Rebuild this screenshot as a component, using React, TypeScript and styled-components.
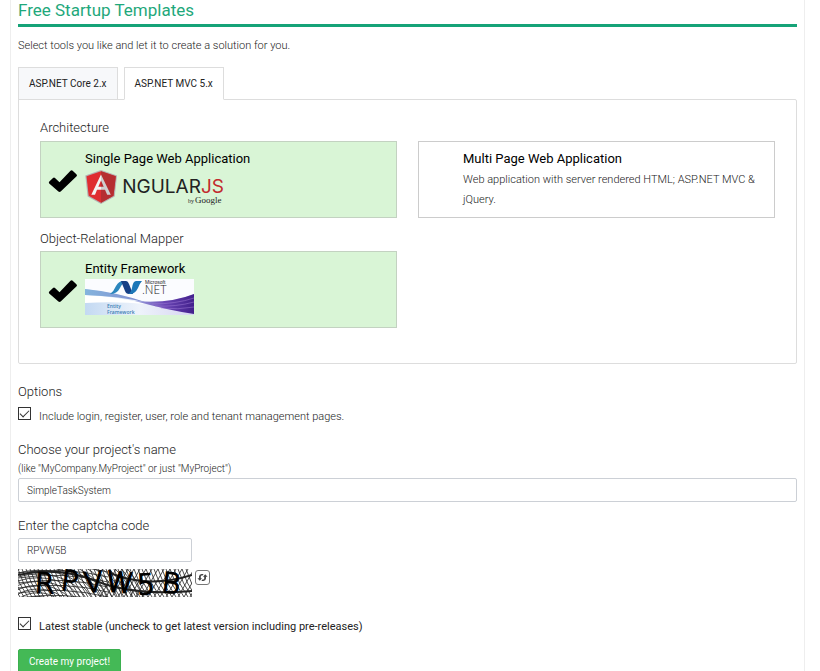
import React, { useState } from "react";
import styled, { createGlobalStyle } from "styled-components";

const GlobalStyle = createGlobalStyle`
  *, *::before, *::after { box-sizing: border-box; }
  html { overflow: hidden; }
  body {
    margin: 0;
    background: #fff;
    color: #222;
    font-family: Roboto, "Liberation Sans", sans-serif;
    font-size: 11px;
    font-weight: 300;
  }
`;

const Page = styled.main`
  margin: 0 15px 0 10px;
  padding: 0 7px;
  border: solid #eee;
  border-width: 0 1px;
`;

const Title = styled.h1`
  margin: 0 0 8px;
  height: 27px;
  border-bottom: 3px solid #16a378;
  color: #1fa87b;
  font-size: 17px;
  font-weight: 400;
  line-height: 20px;
`;

const Intro = styled.p`
  margin: 0 0 10px;
  line-height: 22px;
`;

const Tabs = styled.div`
  display: flex;
  gap: 6px;
  margin-bottom: -1px;
`;

const Tab = styled.button<{ $active: boolean }>`
  position: relative;
  height: 33px;
  padding: 0 10px;
  border: 1px solid #ddd;
  border-bottom-color: ${(p) => (p.$active ? "#fff" : "#ddd")};
  background: ${(p) => (p.$active ? "#fff" : "#f7f8fa")};
  color: #222;
  font: 400 10px Roboto, sans-serif;
`;

const Panel = styled.section`
  padding: 18px 21px 35px;
  border: 1px solid #ddd;
  border-radius: 0 2px 2px 2px;
`;

const Heading = styled.h2`
  margin: 0;
  font-size: 13px;
  font-weight: 300;
  line-height: 20px;
`;

const Choices = styled.div`
  display: grid;
  grid-template-columns: 1fr 1fr;
  gap: 21px;
  margin: 3px 0 11px;

  &:last-child { margin: 2px 0 0; }
`;

const Choice = styled.button<{ $selected: boolean }>`
  display: grid;
  grid-template-columns: 30px 1fr;
  gap: 7px;
  align-items: start;
  height: 77px;
  padding: 7px 7px;
  border: 1px solid ${(p) => (p.$selected ? "#c3d2c1" : "#ccc")};
  background: ${(p) => (p.$selected ? "#d9f5d6" : "#fff")};
  color: #222;
  font: 300 11px/20px Roboto, sans-serif;
  text-align: left;

  > svg { margin-top: 20px; }
`;

const ChoiceTitle = styled.strong`
  display: block;
  color: #000;
  font-size: 13px;
  font-weight: 400;
  line-height: 20px;
`;

const ChoiceText = styled.span`
  display: block;
  padding-top: 1px;
`;

const Logo = styled.svg`
  display: block;
  overflow: visible;
`;

const Field = styled.div<{ $top: number }>`
  margin-top: ${(p) => p.$top}px;
`;

const FieldLabel = styled.label`
  display: block;
  font-size: 13px;
  line-height: 20px;
`;

const Hint = styled.p`
  margin: 0;
  font-size: 10px;
  line-height: 18px;
`;

const TextInput = styled.input<{ $short?: boolean }>`
  display: block;
  width: ${(p) => (p.$short ? "174px" : "100%")};
  height: 24px;
  padding: 0 8px;
  border: 1px solid #ccd0d6;
  border-radius: 2px;
  background: #fff;
  color: #222;
  font: 300 10px Roboto, sans-serif;
`;

const CheckLabel = styled.label<{ $strong?: boolean }>`
  display: flex;
  align-items: flex-start;
  gap: 8px;
  line-height: 20px;
  font-weight: ${(p) => (p.$strong ? 400 : 300)};
`;

const CheckBox = styled.input`
  appearance: none;
  width: 13px;
  height: 13px;
  margin: 0;
  border: 1px solid #333;
  background: #fff;

  &:checked::before {
    content: "";
    display: block;
    width: 9px;
    height: 5px;
    margin: 2px 0 0 1px;
    border: solid #333;
    border-width: 0 0 1px 1px;
    transform: rotate(-45deg);
  }
`;

const CaptchaRow = styled.div`
  display: flex;
  align-items: flex-start;
  gap: 3px;
  margin-top: 7px;
`;

const Refresh = styled.button`
  display: grid;
  place-items: center;
  width: 15px;
  height: 15px;
  margin-top: 1px;
  padding: 0;
  border: 1px solid #777;
  border-radius: 3px;
  background: #fff;
`;

const Submit = styled.button`
  display: block;
  height: 24px;
  margin-top: 12px;
  padding: 0 10px;
  border: 1px solid #3bb04f;
  border-radius: 2px;
  background: #44b956;
  color: #fff;
  font: 400 10px Roboto, sans-serif;
`;

function Tick() {
  return (
    <svg width="30" height="24" viewBox="0 0 30 24" aria-hidden="true">
      <path d="M1.3 12.6 5 8.9Q6 8.1 7 8.9L11.5 13.2 22.5 1.8Q23.6.8 24.7 1.8L28.6 5.4Q29.4 6.4 28.6 7.3L12.7 22.6Q11.5 23.4 10.4 22.6L1.2 14.5Q.4 13.6 1.3 12.6Z" />
    </svg>
  );
}

function AngularLogo() {
  return (
    <Logo width="142" height="40" viewBox="0 0 142 40" role="img" aria-label="AngularJS by Google">
      <path d="M16 1 32 6.5 29.7 27.5 16 35 2.6 27.5.3 6.5Z" fill="#b3b3b3" />
      <path d="M16 2.2 30.8 7.2 28.5 26.7 16 33.7 3.7 26.7 1.5 7.2Z" fill="#df2d31" />
      <path d="M16 2.2 30.8 7.2 28.5 26.7 16 33.7Z" fill="#b52e31" />
      <path d="M16 5.5 6.3 25.7H10L12 20.8H16V17.8H13.3L16 11.5Z" fill="#f4f4f4" />
      <path d="M16 5.5 25.8 25.7H22.2L20 20.8H16V17.8H18.7L16 11.5Z" fill="#cfcfcf" />
      <text x="139" y="24" textAnchor="end" fontFamily="Inter" fontSize="19" fontWeight="400" fill="#222">
        NGULAR<tspan fill="#c22a2e">JS</tspan>
      </text>
      <text x="103" y="34" fontFamily="Liberation Serif" fontSize="6" fill="#222">by</text>
      <text x="110" y="34" fontFamily="Liberation Serif" fontSize="9" fill="#222">Google</text>
    </Logo>
  );
}

function EntityLogo() {
  return (
    <Logo width="109" height="36" viewBox="0 0 109 36" role="img" aria-label="Microsoft .NET Entity Framework">
      <defs>
        <linearGradient id="sky" x1="0" y1="0" x2="1" y2="0">
          <stop offset="0" stopColor="#c3d9f2" />
          <stop offset=".5" stopColor="#eef3fb" />
          <stop offset="1" stopColor="#d6d5f1" />
        </linearGradient>
        <linearGradient id="violet" x1="0" y1="0" x2="1" y2="0">
          <stop offset="0" stopColor="#9aa4df" />
          <stop offset=".5" stopColor="#6a46b4" />
          <stop offset="1" stopColor="#42208c" />
        </linearGradient>
        <linearGradient id="band" x1="0" y1="0" x2="1" y2="0">
          <stop offset="0" stopColor="#84b4dd" />
          <stop offset="1" stopColor="#8289cf" />
        </linearGradient>
      </defs>
      <path d="M0 0H109V36H0Z" fill="#fbfcff" />
      <path d="M0 10Q32 14 58 22 88 24 109 15V36H0Z" fill="url(#sky)" />
      <path d="M0 16Q30 17 62 25 30 22 0 24Z" fill="#fff" />
      <path d="M0 10Q32 13 63 24 35 17 0 16Z" fill="url(#band)" />
      <path d="M50 22Q84 25 109 15V35Q82 31 50 22Z" fill="url(#violet)" />
      <path d="M67 25Q91 25 109 19M70 27Q91 28 109 23M76 29Q93 31 109 28" fill="none" stroke="#a07dd6" strokeWidth=".5" />
      <path d="M25 15Q29 12 31 7 34 2 38 2L42 2Q37 4 35 9 32 15 25 15Z" fill="#2b86bd" />
      <path d="M36 2H41Q43 2 44 5L48 15H44Q41 15 40 12Z" fill="#163f86" />
      <path d="M43 15Q46 14 47 9 48 2 51 2H57Q55 4 53 9 50 15 45 15Z" fill="#1c77b8" />
      <text x="60" y="5" fontFamily="Liberation Sans" fontSize="5" fill="#222">Microsoft</text>
      <text x="57" y="15" fontFamily="Open Sans" fontSize="12" fill="#222">.NET</text>
      <text x="22" y="29" fontFamily="Open Sans" fontSize="5" fontWeight="600" fill="#3c7fb5">Entity</text>
      <text x="22" y="35" fontFamily="Open Sans" fontSize="5" fontWeight="600" fill="#3c7fb5">Framework</text>
    </Logo>
  );
}

const rings = Array.from({ length: 20 }, (_, i) => 12 + i * 5);
const slants = Array.from({ length: 46 }, (_, i) => i * 4 - 12);
const sweeps = Array.from({ length: 9 }, (_, i) => i * 5 - 6);
const hatches = Array.from({ length: 18 }, (_, i) => 82 + i * 6);
const glyphs = [
  { char: "R", x: 17, y: 24, turn: 3 },
  { char: "P", x: 43, y: 22, turn: 8 },
  { char: "V", x: 66, y: 23, turn: -5 },
  { char: "W", x: 88, y: 23, turn: 5 },
  { char: "5", x: 119, y: 25, turn: -3 },
  { char: "B", x: 144, y: 24, turn: 6 },
];

function Captcha() {
  return (
    <Logo width="174" height="28" viewBox="0 0 174 28" role="img" aria-label="Captcha code">
      <defs>
        <clipPath id="frame">
          <path d="M0 0H174V28H0Z" />
        </clipPath>
      </defs>
      <g clipPath="url(#frame)" fill="none" stroke="#222" strokeWidth=".8">
        {rings.map((r) => (
          <ellipse key={`r${r}`} cx="20" cy="44" rx={r} ry={r * 0.75} />
        ))}
        {slants.map((x) => (
          <path key={`s${x}`} d={`M${x} 0Q${x + 4} 14 ${x + 14} 28`} />
        ))}
        {sweeps.map((y) => (
          <path key={`w${y}`} d={`M0 ${y}Q45 ${y - 7} 90 ${y + 4}`} />
        ))}
        {hatches.map((x) => (
          <path key={`h${x}`} d={`M${x} 28 ${x + 16} 0`} />
        ))}
        <path d="M0 6Q40 -3 78 12T174 22M92 4Q130 20 174 6" strokeWidth="2" />
      </g>
      <g fontFamily="DejaVu Sans" fontSize="28" fill="#000" stroke="#000" strokeWidth="1.5">
        {glyphs.map((g) => (
          <text key={g.char} x={g.x} y={g.y} transform={`rotate(${g.turn} ${g.x + 10} 14)`}>
            {g.char}
          </text>
        ))}
      </g>
    </Logo>
  );
}

function RefreshIcon() {
  return (
    <svg width="13" height="13" viewBox="0 0 13 13" fill="#444" aria-hidden="true">
      <path d="M3 7.2V5.6Q3.2 3.2 5.6 3H7.6L6.6 4.6H5.8Q4.8 4.7 4.8 5.6V7.2H6L3.8 9.8 1.4 7.2Z" />
      <path d="M10 5.8V7.4Q9.8 9.8 7.4 10H5.4L6.4 8.4H7.2Q8.2 8.3 8.2 7.4V5.8H7L9.2 3.2 11.6 5.8Z" />
    </svg>
  );
}

const tabNames = ["ASP.NET Core 2.x", "ASP.NET MVC 5.x"];

export default function App() {
  const [tab, setTab] = useState(1);
  const [architecture, setArchitecture] = useState("spa");

  return (
    <>
      <GlobalStyle />
      <Page>
        <Title>Free Startup Templates</Title>
        <Intro>Select tools you like and let it to create a solution for you.</Intro>
        <Tabs role="tablist">
          {tabNames.map((name, i) => (
            <Tab key={name} type="button" role="tab" aria-selected={tab === i} $active={tab === i} onClick={() => setTab(i)}>
              {name}
            </Tab>
          ))}
        </Tabs>
        <Panel role="tabpanel">
          <Heading>Architecture</Heading>
          <Choices>
            <Choice type="button" $selected={architecture === "spa"} aria-pressed={architecture === "spa"} onClick={() => setArchitecture("spa")}>
              {architecture === "spa" ? <Tick /> : <span />}
              <span>
                <ChoiceTitle>Single Page Web Application</ChoiceTitle>
                <AngularLogo />
              </span>
            </Choice>
            <Choice type="button" $selected={architecture === "mpa"} aria-pressed={architecture === "mpa"} onClick={() => setArchitecture("mpa")}>
              {architecture === "mpa" ? <Tick /> : <span />}
              <span>
                <ChoiceTitle>Multi Page Web Application</ChoiceTitle>
                <ChoiceText>Web application with server rendered HTML; ASP.NET MVC &amp; jQuery.</ChoiceText>
              </span>
            </Choice>
          </Choices>
          <Heading>Object-Relational Mapper</Heading>
          <Choices>
            <Choice type="button" $selected aria-pressed>
              <Tick />
              <span>
                <ChoiceTitle>Entity Framework</ChoiceTitle>
                <EntityLogo />
              </span>
            </Choice>
          </Choices>
        </Panel>

        <Field $top={18}>
          <Heading>Options</Heading>
          <Field $top={5}>
            <CheckLabel>
              <CheckBox type="checkbox" defaultChecked />
              Include login, register, user, role and tenant management pages.
            </CheckLabel>
          </Field>
        </Field>

        <Field $top={13}>
          <FieldLabel htmlFor="project">Choose your project's name</FieldLabel>
          <Hint>(like "MyCompany.MyProject" or just "MyProject")</Hint>
          <TextInput id="project" defaultValue="SimpleTaskSystem" />
        </Field>

        <Field $top={14}>
          <FieldLabel htmlFor="captcha">Enter the captcha code</FieldLabel>
          <Field $top={2}>
            <TextInput id="captcha" $short defaultValue="RPVW5B" />
          </Field>
          <CaptchaRow>
            <Captcha />
            <Refresh type="button" aria-label="New captcha code">
              <RefreshIcon />
            </Refresh>
          </CaptchaRow>
        </Field>

        <Field $top={20}>
          <CheckLabel $strong>
            <CheckBox type="checkbox" defaultChecked />
            Latest stable (uncheck to get latest version including pre-releases)
          </CheckLabel>
        </Field>
        <Submit type="button">Create my project!</Submit>
      </Page>
    </>
  );
}
